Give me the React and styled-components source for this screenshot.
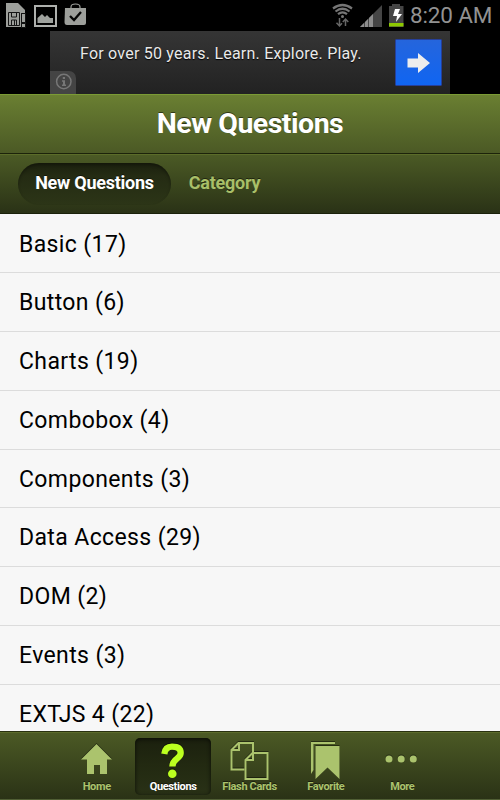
import React from "react";
import styled, { createGlobalStyle } from "styled-components";

const GlobalStyle = createGlobalStyle`
  * { box-sizing: border-box; }
  body { margin: 0; background: #000; font-family: Roboto, "Liberation Sans", sans-serif; }
`;

const Screen = styled.div`
  width: 500px;
  height: 800px;
  overflow: hidden;
  display: flex;
  flex-direction: column;
  background: #000;
`;

const StatusBar = styled.header`
  flex: 0 0 31px;
  display: flex;
  justify-content: space-between;
  padding: 0 6px 0 5px;
`;

const StatusGroup = styled.div`
  display: flex;
  svg { display: block; flex: none; }
`;

const Clock = styled.span`
  width: 84px;
  margin-left: 4px;
  font-size: 22.5px;
  line-height: 31px;
  letter-spacing: -0.15px;
  white-space: nowrap;
  color: #929292;
`;

const AdStrip = styled.div`
  flex: 0 0 63px;
  display: flex;
  justify-content: center;
`;

const Ad = styled.div`
  position: relative;
  width: 400px;
  display: flex;
  align-items: flex-start;
  justify-content: space-between;
  padding: 8px 8px 0 30px;
  background: linear-gradient(#353535, #222);
`;

const AdText = styled.span`
  font-size: 16px;
  line-height: 30px;
  letter-spacing: 0.22px;
  white-space: nowrap;
  color: #e9e9e9;
  text-shadow: 0 1px 1px #000;
`;

const AdButton = styled.div`
  width: 47px;
  height: 47px;
  border: 1px solid #263f9a;
  border-radius: 1px;
  background: linear-gradient(#2565dc, #1065f2);
  svg { display: block; }
`;

const AdInfo = styled.div`
  position: absolute;
  left: 0;
  bottom: 0;
  width: 26px;
  height: 23px;
  border-top-right-radius: 7px;
  background: #444;
  svg { display: block; }
`;

const TitleBar = styled.div`
  flex: 0 0 60px;
  border-top: 1px solid #7b9b35;
  border-bottom: 1px solid #1c230a;
  background: linear-gradient(#6a7f32, #4b5925);
  display: flex;
  justify-content: center;
`;

const Title = styled.h1`
  margin: 0;
  font-size: 28.5px;
  font-weight: 700;
  line-height: 57px;
  letter-spacing: -0.5px;
  white-space: nowrap;
  color: #fff;
  text-shadow: 0 -1px 0 rgba(0, 0, 0, 0.5);
`;

const SubBar = styled.nav`
  flex: 0 0 60px;
  display: flex;
  align-items: flex-start;
  padding: 8px 0 0 18px;
  border-top: 1px solid #5b6c29;
  border-bottom: 1px solid #1b220b;
  background: linear-gradient(#4b5a25, #2a3216);
`;

const SubTab = styled.div`
  height: 42px;
  width: ${(p) => (p.$active ? "153px" : "107px")};
  text-align: center;
  border-radius: 21px;
  font-size: 18px;
  font-weight: 700;
  line-height: 39px;
  letter-spacing: -0.25px;
  white-space: nowrap;
  color: ${(p) => (p.$active ? "#fff" : "#a8bf68")};
  text-shadow: 0 -1px 0 rgba(0, 0, 0, 0.5);
  background: ${(p) => (p.$active ? "linear-gradient(#1b200e, #242b13 30%, #2c3517)" : "none")};
  box-shadow: ${(p) => (p.$active ? "inset 0 2px 3px rgba(0,0,0,.3)" : "none")};
`;

const List = styled.main`
  flex: 1 1 0;
  min-height: 0;
  overflow: hidden;
  padding-top: 0.6px;
  background: #f7f7f7;
`;

const Row = styled.div`
  height: 58.75px;
  padding-left: 19px;
  border-bottom: 1px solid #dcdcdc;
  font-size: 23px;
  line-height: 59px;
  letter-spacing: 0.38px;
  white-space: nowrap;
  color: #000;
`;

const TabBar = styled.nav`
  flex: 0 0 69px;
  display: flex;
  justify-content: center;
  gap: 0.4px;
  padding: 6px 1px 0 0;
  border-top: 1px solid #29310f;
  border-bottom: 1px solid #505e34;
  box-shadow: inset 0 1px 0 #5b6b2b;
  background: linear-gradient(#4c5a25, #2a3216);
`;

const Tab = styled.div`
  width: 76px;
  height: 57px;
  display: flex;
  flex-direction: column;
  align-items: center;
  padding-top: 2px;
  border-radius: 5px;
  color: ${(p) => (p.$active ? "#fff" : "#abc36d")};
  background: ${(p) => (p.$active ? "linear-gradient(#1b200e, #222911 45%, #293116)" : "none")};
  box-shadow: ${(p) => (p.$active ? "inset 0 1px 4px rgba(0,0,0,.7)" : "none")};
  svg { display: block; filter: drop-shadow(0 -1px 0 rgba(0,0,0,.45)); }
`;

const TabLabel = styled.span`
  margin-top: 1px;
  font-size: 11px;
  font-weight: 700;
  line-height: 14px;
  letter-spacing: -0.35px;
  white-space: nowrap;
  text-shadow: 0 -1px 0 rgba(0, 0, 0, 0.5);
`;

const StatusLeft = () => (
  <svg width="86" height="31" viewBox="5 0 86 31">
    <path fill="#9d9f9b" d="M6 3H18L25 10V13H6Z" />
    <path fill="#9d9f9b" d="M6 13H21V27H6Z" />
    <path fill="none" stroke="#161616" d="M8.5 12.5H19.5V25.5H8.5Z M11.5 13V17H16.5V13 M11.5 25V20H16.5V25 M14.5 20V25" />
    <path fill="#9d9f9b" stroke="#111" d="M21.5 13.5H25.5V22.5H21.5Z M21.5 23.5H25.5V27.5H21.5Z" />
    <path fill="none" stroke="#aeb0ad" strokeWidth="2" d="M35 6H56V26H35Z" />
    <path fill="#9fa29e" d="M37.5 18L42 14L45 17L47 15L50 18H53V23H37.5Z" />
    <path fill="none" stroke="#9d9f9b" strokeWidth="1.2" d="M71 9V7Q71 4 75.5 4Q80 4 80 7V9" />
    <path fill="#9d9f9b" d="M65 8H86V23Q86 25 84 25H67Q64.5 25 64.5 22Z" />
    <path fill="none" stroke="#050505" strokeWidth="2.3" d="M70 16L74 20L81 12" />
  </svg>
);

const StatusRight = () => (
  <svg width="75" height="31" viewBox="331 0 75 31">
    <g fill="none" stroke="#767676" strokeWidth="2.2">
      <path d="M333 8.5Q342.5 1.5 352 8.5" />
      <path d="M335.5 11.5Q342.5 6 349.5 11.5" />
      <path d="M338 14.2Q342.5 10.6 347 14.2" />
    </g>
    <circle cx="342.5" cy="16.5" r="1.5" fill="#777" />
    <path fill="none" stroke="#666" strokeWidth="1.5" d="M339.5 18V26M336.5 22.8L339.5 26L342 23.3M345.5 26V19M342.8 22L345.5 19L348.3 22" />
    <path fill="#454545" d="M382 5V27H360Z" />
    <path fill="#8d8d8d" d="M360 27L364 23V27Z M365 22L368 19V27H365Z M369 18L373 14V27H369Z" />
    <path fill="#454545" d="M392 4H400V6H403.5V27H389V6H392Z" />
    <path fill="#8dc800" d="M389 23H403.5V26.5H389Z" />
    <path fill="#fff" d="M395 9H400L398 14H402L396 22L397 16H393Z" />
  </svg>
);

const AdArrow = () => (
  <svg width="45" height="45" viewBox="396 40 45 45">
    <path fill="#ededed" d="M407.5 58.5H418V53L430 63L418 73V67.5H407.5Z" />
  </svg>
);

const InfoIcon = () => (
  <svg width="26" height="23" viewBox="0 0 26 23">
    <circle cx="13.8" cy="10.5" r="7.2" fill="none" stroke="#777" strokeWidth="1.5" />
    <path fill="#777" d="M12.8 6H15V8H12.8Z M12 9.3H15V13.5H16V15H12V13.5H13V10.8H12Z" />
  </svg>
);

const HomeIcon = () => (
  <path fill="#abc36d" d="M96.5 744L112 759.5H107V774H100V765H94V774H87V759.5H81Z" />
);

const QuestionIcon = () => (
  <g>
    <path fill="none" stroke="#bcff20" strokeWidth="6.3" d="M164.3 754Q165.2 746.7 172 746.7Q180.7 746.7 180.7 753C180.7 759 172.4 758 172.4 766.5" />
    <circle cx="172.3" cy="773.8" r="4.3" fill="#bcff20" />
  </g>
);

const CardsIcon = () => (
  <g fill="none" stroke="#abc36d" strokeWidth="2">
    <path d="M244 769.5H231V750L238 743H252.5V753" />
    <path d="M238.5 743V750H231" />
    <path d="M252 753H267V779H245V760Z" />
    <path d="M252.5 753V760H245" />
  </g>
);

const FavoriteIcon = () => (
  <g>
    <path fill="#abc36d" d="M311 742H335V744H313.5V770L311 774Z" />
    <path fill="#abc36d" d="M315.5 746H339.5V779L327.5 767.5L315.5 779Z" />
  </g>
);

const MoreIcon = () => (
  <g fill="#abc36d">
    <circle cx="389" cy="759" r="3.5" />
    <circle cx="401.2" cy="759" r="3.5" />
    <circle cx="413.3" cy="759" r="3.5" />
  </g>
);

const rows = [
  "Basic (17)", "Button (6)", "Charts (19)", "Combobox (4)", "Components (3)",
  "Data Access (29)", "DOM (2)", "Events (3)", "EXTJS 4 (22)",
];

const tabs = [
  { label: "Home", x: 77, Icon: HomeIcon },
  { label: "Questions", x: 153, Icon: QuestionIcon, active: true },
  { label: "Flash Cards", x: 229.5, Icon: CardsIcon },
  { label: "Favorite", x: 306, Icon: FavoriteIcon },
  { label: "More", x: 382, Icon: MoreIcon },
];

export default function App() {
  return (
    <Screen>
      <GlobalStyle />
      <StatusBar>
        <StatusGroup><StatusLeft /></StatusGroup>
        <StatusGroup><StatusRight /><Clock>8:20 AM</Clock></StatusGroup>
      </StatusBar>
      <AdStrip>
        <Ad>
          <AdText>For over 50 years. Learn. Explore. Play.</AdText>
          <AdButton><AdArrow /></AdButton>
          <AdInfo><InfoIcon /></AdInfo>
        </Ad>
      </AdStrip>
      <TitleBar><Title>New Questions</Title></TitleBar>
      <SubBar>
        <SubTab $active>New Questions</SubTab>
        <SubTab>Category</SubTab>
      </SubBar>
      <List>{rows.map((r) => <Row key={r}>{r}</Row>)}</List>
      <TabBar>
        {tabs.map(({ label, x, Icon, active }) => (
          <Tab key={label} $active={active}>
            <svg width="40" height="39" viewBox={`${x} 740 40 39`} overflow="visible"><Icon /></svg>
            <TabLabel>{label}</TabLabel>
          </Tab>
        ))}
      </TabBar>
    </Screen>
  );
}
